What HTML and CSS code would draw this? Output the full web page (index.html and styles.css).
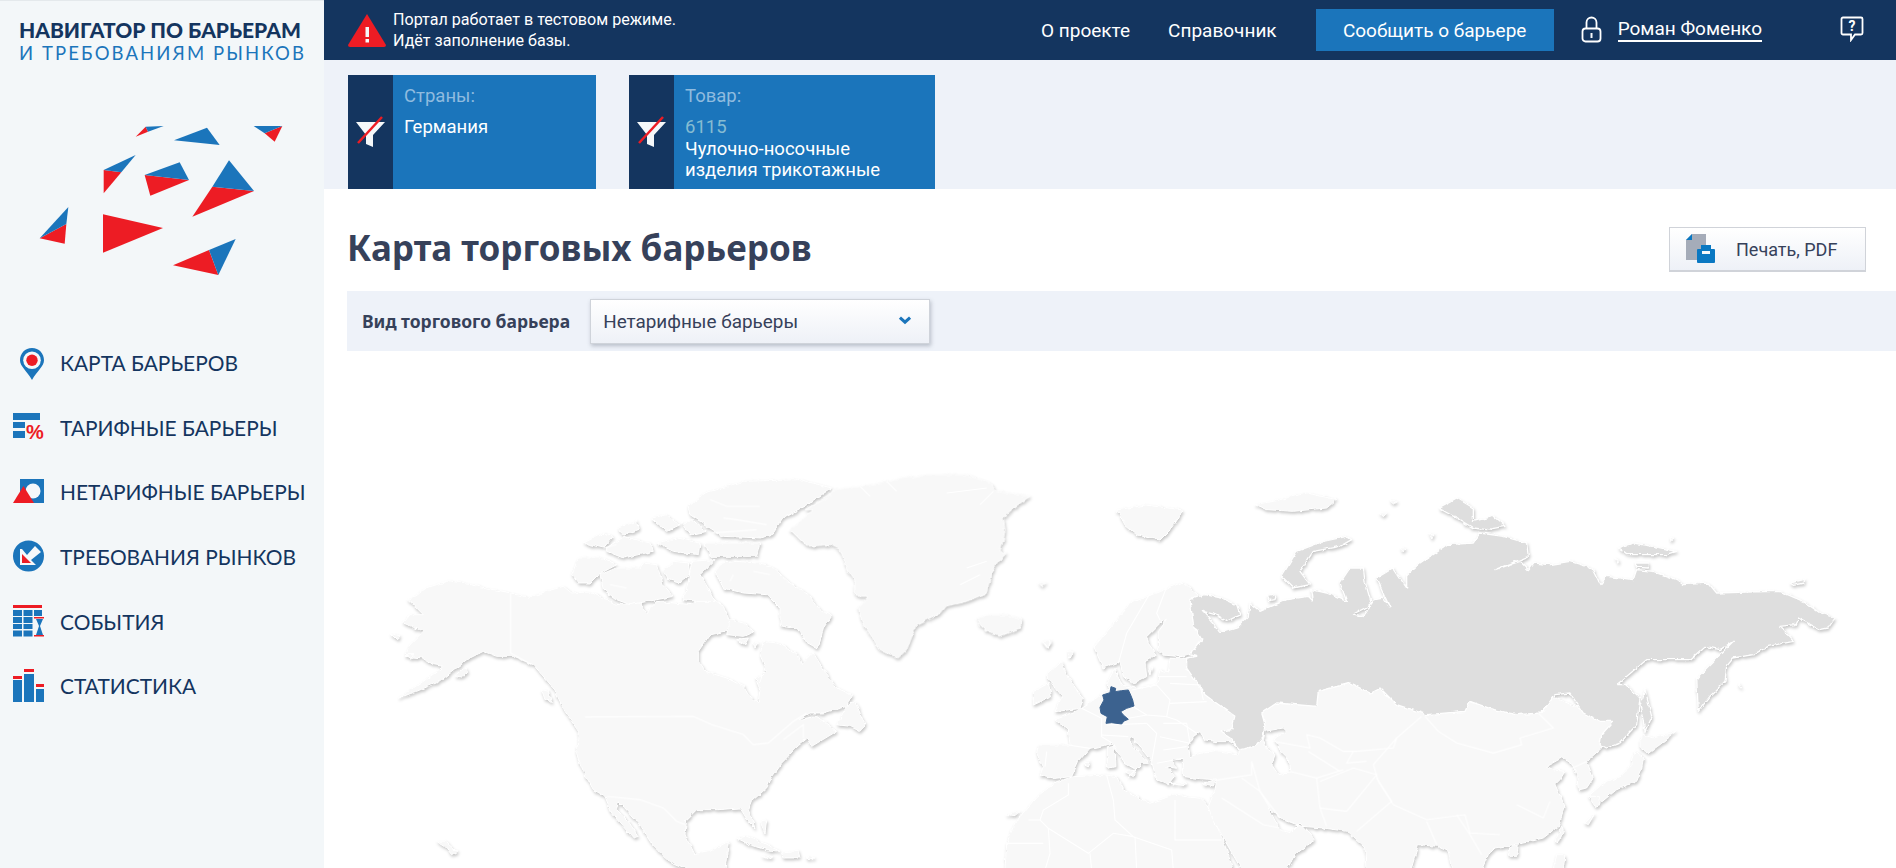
FILE: index.html
```html
<!DOCTYPE html>
<html lang="ru">
<head>
<meta charset="utf-8">
<title>Навигатор по барьерам</title>
<link rel="stylesheet" href="styles.css">
</head>
<body>
<aside class="sidebar">
  <div class="brand">
    <div class="brand-top">НАВИГАТОР ПО БАРЬЕРАМ</div>
    <div class="brand-sub">И ТРЕБОВАНИЯМ РЫНКОВ</div>
  </div>
  <svg class="logo" viewBox="100 360 780 480" aria-hidden="true">
    <g class="c-red">
      <polygon points="408,410 438,380 445,395"/><polygon points="795,400 848,378 825,425"/>
      <polygon points="312,510 365,517 312,580"/><polygon points="435,525 568,540 452,587"/>
      <polygon points="638,560 763,573 578,650"/><polygon points="120,715 200,672 195,731"/>
      <polygon points="310,643 490,684 310,758"/><polygon points="520,796 628,750 656,825"/>
    </g>
    <g class="c-blue">
      <polygon points="438,380 492,378 445,395"/><polygon points="523,421 622,383 660,435"/>
      <polygon points="762,378 848,378 795,400"/><polygon points="312,510 408,465 365,517"/>
      <polygon points="435,525 540,487 568,540"/><polygon points="688,481 763,573 638,560"/>
      <polygon points="206,621 200,672 120,715"/><polygon points="628,750 708,717 656,825"/>
    </g>
  </svg>
  <nav class="menu">
    <a class="menu-item">
      <svg class="menu-icon" viewBox="0 0 32 34"><path class="c-blue" d="M19 2C12 2 7 7.500 7 14.300c0 6 7 11 12 19.700 5-8.700 12-13.700 12-19.700C31 7.500 26 2 19 2z"/><circle class="c-white" cx="19" cy="14.300" r="8.800"/><circle class="c-red" cx="19" cy="14.300" r="5.700"/></svg>
      <span>КАРТА БАРЬЕРОВ</span>
    </a>
    <a class="menu-item">
      <svg class="menu-icon" viewBox="0 0 32 34"><rect class="c-blue" x="0" y="3" width="27" height="7"/><rect class="c-blue" x="0" y="12" width="12" height="6"/><rect class="c-blue" x="0" y="21" width="12" height="7"/><text class="pct" x="13" y="29">%</text></svg>
      <span>ТАРИФНЫЕ БАРЬЕРЫ</span>
    </a>
    <a class="menu-item">
      <svg class="menu-icon" viewBox="0 0 32 34"><rect class="c-blue" x="7" y="4" width="24" height="24"/><circle class="c-white" cx="20" cy="16" r="7.500"/><polygon class="c-red" points="0,28 21,28 10.500,11"/></svg>
      <span>НЕТАРИФНЫЕ БАРЬЕРЫ</span>
    </a>
    <a class="menu-item">
      <svg class="menu-icon" viewBox="0 0 32 34"><circle class="c-blue" cx="15.500" cy="16" r="15.500"/><polygon class="c-white" points="7,9 7,25 23,25 18,20 28,12 22,6 14,15 9,9"/><polygon class="c-red" points="9,14 9,23 18,23"/></svg>
      <span>ТРЕБОВАНИЯ РЫНКОВ</span>
    </a>
    <a class="menu-item">
      <svg class="menu-icon" viewBox="0 0 32 34"><rect class="c-red" x="0" y="1" width="29" height="3"/><g class="c-blue"><rect x="0" y="6" width="9" height="6"/><rect x="10.500" y="6" width="9" height="6"/><rect x="21" y="6" width="8" height="6"/><rect x="0" y="13" width="9" height="6"/><rect x="10.500" y="13" width="9" height="6"/><rect x="0" y="20" width="9" height="5"/><rect x="10.500" y="20" width="9" height="5"/><rect x="0" y="26.500" width="9" height="6"/><rect x="10.500" y="26.500" width="9" height="6"/><polygon points="23,15 30,15 27,22 30,31 23,31 26,22"/></g><rect class="c-red" x="21" y="13" width="10" height="1.500"/><rect class="c-red" x="21" y="31" width="10" height="1.500"/></svg>
      <span>СОБЫТИЯ</span>
    </a>
    <a class="menu-item">
      <svg class="menu-icon" viewBox="0 0 32 34"><g class="c-blue"><rect x="0" y="11" width="9" height="22"/><rect x="11" y="5" width="10" height="28"/><rect x="23" y="20" width="8" height="13"/></g><g class="c-red"><rect x="0" y="7" width="9" height="3"/><rect x="11" y="0" width="10" height="3"/><rect x="23" y="15" width="8" height="3"/></g></svg>
      <span>СТАТИСТИКА</span>
    </a>
  </nav>
</aside>

<main class="main">
  <header class="topbar">
    <svg class="warn-icon" viewBox="0 0 38 33"><path class="c-red" d="M19 0 L38 31 Q38 33 36 33 L2 33 Q0 33 0 31 Z"/><rect class="c-white" x="17.500" y="13" width="3.500" height="10"/><rect class="c-white" x="17.500" y="25" width="3.500" height="3.500"/></svg>
    <p class="warn-text">Портал работает в тестовом режиме.<br>Идёт заполнение базы.</p>
    <div class="topbar-spacer"></div>
    <a class="top-link top-link-first">О проекте</a>
    <a class="top-link top-link-second">Справочник</a>
    <a class="report-btn">Сообщить о барьере</a>
    <svg class="lock-icon" viewBox="0 0 21 27"><path class="line-white" d="M5.500 13V6.500a5 5 0 0 1 10 0V13"/><rect class="line-white" x="1.500" y="12.500" width="18" height="13" rx="3"/><rect class="c-white" x="9.500" y="17" width="2" height="5"/></svg>
    <a class="user-link">Роман Фоменко</a>
    <svg class="help-icon" viewBox="0 0 24 26"><path class="line-white" d="M3 1.500H21a1.500 1.500 0 0 1 1.500 1.500V17a1.500 1.500 0 0 1-1.500 1.500H15L11 24V18.500H3A1.500 1.500 0 0 1 1.500 17V3A1.500 1.500 0 0 1 3 1.500z"/><text class="help-q" x="12" y="15">?</text></svg>
  </header>

  <section class="filters">
    <div class="filter-card filter-card-country">
      <div class="filter-side">
        <svg class="filter-icon" viewBox="0 0 30 32"><polygon class="c-white" points="0,6 29,6 17,19 17,31 10,28 10,19"/><line class="slash" x1="2" y1="27" x2="26" y2="1"/></svg>
      </div>
      <div class="filter-body">
        <div class="filter-label">Страны:</div>
        <div class="filter-value">Германия</div>
      </div>
    </div>
    <div class="filter-card filter-card-goods">
      <div class="filter-side">
        <svg class="filter-icon" viewBox="0 0 30 32"><polygon class="c-white" points="0,6 29,6 17,19 17,31 10,28 10,19"/><line class="slash" x1="2" y1="27" x2="26" y2="1"/></svg>
      </div>
      <div class="filter-body">
        <div class="filter-label">Товар:</div>
        <div class="filter-code">6115</div>
        <div class="filter-goods">Чулочно-носочные<br>изделия трикотажные</div>
      </div>
    </div>
  </section>

  <div class="title-row">
    <h1 class="page-title">Карта торговых барьеров</h1>
    <a class="print-btn">
      <svg class="print-icon" viewBox="0 0 30 30"><polygon class="c-grey" points="0,6 6,0 20,0 20,26 0,26"/><polygon class="c-print" points="0,6 6,0 6,6"/><rect class="c-print" x="15" y="11" width="10" height="6"/><rect class="c-print" x="11" y="15" width="18" height="14" rx="1"/><rect class="c-white" x="16" y="17" width="8" height="3"/></svg>
      <span>Печать, PDF</span>
    </a>
  </div>

  <div class="type-bar">
    <span class="type-label">Вид торгового барьера</span>
    <div class="type-select">
      <span>Нетарифные барьеры</span>
      <svg class="chevron" viewBox="0 0 12 8"><polyline points="1.500,1.500 6,5.500 10.500,1.500"/></svg>
    </div>
  </div>

  <div class="map-area">
    <svg class="map" viewBox="324 351 1572 517" aria-hidden="true">
      <defs>
        <filter id="rough" filterUnits="userSpaceOnUse" x="324" y="351" width="1572" height="517" color-interpolation-filters="sRGB">
          <feTurbulence type="fractalNoise" baseFrequency="0.16" numOctaves="2" seed="4" result="n"/>
          <feDisplacementMap in="SourceGraphic" in2="n" scale="4" xChannelSelector="R" yChannelSelector="G" result="d"/>
          <feDropShadow in="d" dx="1" dy="2" stdDeviation="1.600" flood-color="#000" flood-opacity=".22"/>
        </filter>
      </defs>
      <g filter="url(#rough)">
        <!-- North America -->
        <g class="land" transform="translate(390 468) scale(.33333)">
          <path d="M175,338 L240,350 L362,375 L415,388 L470,370 L520,355 L545,375 L600,372 L650,395 L680,410 L750,405 L770,435 L800,400 L850,405 L905,410 L920,395 L960,385 L980,400 L1000,415 L1015,450 L1020,460 L1005,490 L960,500 L925,550 L925,580 L945,610 L1010,630 L1060,655 L1075,680 L1105,705 L1110,665 L1100,640 L1130,610 L1110,560 L1120,520 L1160,525 L1225,560 L1235,590 L1270,555 L1310,620 L1340,660 L1385,680 L1370,715 L1300,735 L1260,735 L1225,755 L1280,745 L1340,790 L1265,835 L1250,810 L1225,830 L1190,870 L1170,890 L1145,925 L1130,960 L1085,1000 L1075,1025 L1095,1080 L1075,1060 L1050,1020 L985,1025 L920,1025 L890,1055 L885,1100 L915,1160 L960,1150 L1015,1120 L1005,1205 L900,1205 L840,1180 L790,1135 L745,1065 L705,1020 L685,1000 L680,1025 L715,1060 L745,1105 L730,1110 L690,1065 L665,1035 L645,985 L610,965 L580,910 L560,860 L565,790 L525,730 L490,660 L430,590 L370,565 L320,565 L280,550 L240,570 L200,600 L150,640 L80,670 L25,690 L100,640 L160,595 L130,590 L100,570 L45,565 L60,530 L100,490 L40,465 L60,440 L100,440 L55,395 L110,360 Z"/>
          <path d="M975,310 L1000,285 L1040,280 L1100,285 L1150,300 L1200,345 L1255,380 L1290,425 L1325,445 L1300,480 L1285,540 L1250,520 L1220,480 L1170,470 L1170,420 L1130,380 L1060,375 L1000,360 Z"/>
          <path d="M1020,455 L1060,465 L1095,490 L1060,505 L1010,500 Z"/>
          <path d="M630,320 L680,300 L750,300 L760,285 L800,290 L820,350 L850,385 L800,395 L720,410 L680,395 L640,365 Z"/>
          <path d="M545,320 L565,270 L640,270 L680,290 L625,320 L600,345 L565,345 Z"/>
          <path d="M820,310 L850,280 L895,285 L900,320 L870,345 L835,335 Z"/>
          <path d="M905,280 L975,275 L930,320 L960,370 L975,400 L920,400 L880,395 L895,340 Z"/>
          <path d="M945,75 L1060,40 L1230,35 L1325,60 L1250,110 L1180,150 L1150,195 L1115,210 L1000,205 L960,180 L900,140 L895,115 Z"/>
          <path d="M945,225 L1110,225 L1100,265 L960,265 Z"/>
          <path d="M580,225 L640,195 L670,205 L640,240 Z"/>
          <path d="M650,240 L700,205 L780,225 L790,250 L700,270 L650,250 Z"/>
          <path d="M680,180 L740,160 L745,185 L700,200 Z"/>
          <path d="M785,150 L830,140 L870,170 L830,190 Z"/>
          <path d="M875,165 L910,155 L950,190 L900,200 Z"/>
          <path d="M800,225 L860,210 L930,225 L925,260 L850,250 Z"/>
          <path d="M1040,515 L1075,510 L1065,530 Z"/>
          <path d="M1090,525 L1105,525 L1095,540 Z"/>
          <path d="M1095,630 L1115,620 L1110,645 Z"/>
          <path d="M1340,770 L1370,715 L1395,700 L1425,770 L1410,790 L1380,775 Z"/>
          <path d="M455,665 L475,670 L485,700 L465,695 Z"/>
          <path d="M195,625 L225,600 L232,610 L215,630 Z"/>
          <path d="M0,495 L30,505 L20,515 Z"/>
          <path d="M45,560 L70,560 L65,572 Z"/>
          <path d="M140,1120 L165,1120 L200,1150 L185,1160 L165,1135 Z"/>
          <path d="M1040,1110 L1070,1105 L1120,1125 L1170,1150 L1130,1145 L1080,1130 Z"/>
          <path d="M1175,1155 L1225,1150 L1230,1170 L1180,1170 Z"/>
          <path d="M1115,1165 L1145,1165 L1140,1175 Z"/>
          <path d="M1250,1165 L1275,1170 L1250,1172 Z"/>
          <path d="M1110,1060 L1130,1055 L1125,1095 Z"/>
        </g>
        <!-- Greenland, Iceland -->
        <g class="land" transform="translate(790 468) scale(.33333)">
          <path d="M0,185 L70,125 L45,125 L115,85 L130,65 L210,55 L290,40 L400,20 L530,20 L600,45 L620,70 L720,85 L670,120 L640,150 L645,185 L640,215 L630,250 L645,255 L605,310 L595,350 L590,375 L530,400 L465,415 L450,435 L380,470 L350,545 L325,570 L270,545 L215,460 L205,420 L235,385 L195,385 L195,340 L175,310 L150,245 L120,230 L50,235 Z"/>
          <path d="M560,450 L600,440 L650,440 L695,455 L690,480 L630,505 L590,490 L570,470 Z"/>
          <path d="M745,345 L765,345 L755,358 Z"/>
          <path d="M755,520 L785,520 L770,540 Z"/>
        </g>
        <!-- Europe islands, Scandinavia, Africa -->
        <g class="land" transform="translate(1000 620) scale(.33333)">
          <path d="M549,-114 L393,-51 L282,81 L309,144 L360,125 L370,170 L400,190 L440,170 L435,125 L470,105 L445,70 L440,50 L480,10 L500,0 L475,35 L475,90 L490,105 L540,110 L575,100 L605,60 L585,0 L600,-70 Z"/>
          <path d="M140,165 L185,125 L205,175 L250,235 L240,265 L165,275 L185,230 L165,205 Z"/>
          <path d="M100,215 L145,190 L155,230 L100,255 Z"/>
          <path d="M375,455 L410,450 L400,470 Z"/>
          <path d="M322,380 L342,375 L345,440 L322,445 Z"/>
          <path d="M250,430 L270,425 L265,438 Z"/>
          <path d="M510,490 L560,490 L555,497 Z"/>
          <path d="M610,490 L650,478 L640,498 Z"/>
          <path d="M445,150 L455,140 L450,165 Z"/>
          <path d="M130,65 L150,65 L145,85 Z"/>
          <path d="M200,95 L220,95 L210,112 Z"/>
          <path d="M170,485 L220,470 L320,465 L350,470 L370,510 L450,550 L520,525 L600,535 L620,555 L640,590 L680,690 L700,750 L15,750 L20,670 L40,620 L60,590 L110,530 Z"/>
          <path d="M15,585 L60,575 L45,590 Z"/>
          <path d="M351,-330 L437,-345 L549,-330 L510,-270 L480,-240 L411,-255 L375,-285 Z"/>
        </g>
        <!-- Eurasia -->
        <g transform="translate(1180 468) scale(.33333)">
          <path class="land-path" fill-rule="evenodd" d="M-195,601 L-220,646 L-210,661 L-240,681 L-270,706 L-295,721 L-375,756 L-335,786 L-330,831 L-425,831 L-430,856 L-410,896 L-420,921 L-375,931 L-325,926 L-305,881 L-270,841 L-220,831 L-205,824 L-165,886 L-130,906 L-155,926 L-115,886 L-95,886 L-155,816 L-145,806 L-85,881 L-70,936 L-35,951 L-15,926 L-40,896 L-10,901 L-25,876 L10,871 L10,896 L10,926 L50,931 L110,936 L105,966 L85,1016 L95,1046 L130,1110 L185,1205 L320,1205 L345,1160 L405,1115 L360,1065 L330,1095 L300,1085 L265,1020 L310,1055 L365,1075 L430,1080 L500,1090 L555,1140 L558,1205 L693,1205 L715,1130 L770,1135 L805,1150 L815,1205 L905,1205 L925,1160 L945,1140 L1030,1125 L1090,1110 L1135,1075 L1155,1015 L1125,950 L1140,935 L1155,910 L1120,905 L1100,895 L1145,870 L1175,885 L1190,920 L1195,965 L1220,960 L1240,930 L1220,880 L1265,840 L1265,800 L1300,760 L1100,680 L600,640 L100,640 L25,571 L-30,571 L-35,611 L-60,606 L-70,651 L-130,661 L-175,651 Z M25,836 L40,806 L60,791 L75,816 L110,821 L150,821 L180,841 L175,861 L110,851 L60,856 L30,866 Z M255,790 L310,780 L320,790 L285,810 L300,850 L325,875 L330,915 L295,920 L275,890 L285,860 L265,845 L250,820 Z"/>
          <path class="land-path" d="M985,1140 L1015,1130 L1010,1165 L990,1165 Z"/>
          <path class="land-path" d="M225,110 L280,100 L380,75 L470,95 L440,120 L340,130 L260,125 Z"/>
          <path class="land-path" d="M630,98 L655,98 L640,108 Z"/>
          <path class="land-path" d="M600,135 L620,135 L610,146 Z"/>
          <path class="land-path" d="M745,200 L765,198 L755,210 Z"/>
          <path class="land-path" d="M660,240 L680,240 L670,252 Z"/>
          <g transform="translate(1020 0)">
            <path class="land-path" d="M360,820 L370,800 L400,810 L470,790 L420,830 L385,855 L360,840 Z"/>
            <path class="land-path" d="M345,850 L370,870 L365,905 L350,940 L290,965 L235,1010 L205,985 L250,945 L300,925 L335,890 Z"/>
            <path class="land-path" d="M205,985 L235,985 L240,1010 L225,1015 Z"/>
            <path class="land-path" d="M105,1120 L125,1075 L130,1090 L115,1125 Z"/>
            <path class="land-path" d="M100,1205 L110,1160 L135,1160 L130,1205 Z"/>
            <path class="land-path" d="M195,1065 L225,1035 L205,1070 Z"/>
            <path class="land-path" d="M655,645 L665,660 L655,655 Z"/>
            <path class="land-path" d="M450,208 L462,210 L452,218 Z"/>
            <path class="land-path" d="M285,270 L300,280 L295,288 Z"/>
          </g>
          <path class="russia" d="M30,395 L75,380 L125,390 L170,410 L180,440 L140,460 L105,440 L70,430 L100,465 L120,495 L170,480 L205,445 L210,405 L240,430 L320,395 L385,385 L400,400 L395,365 L440,375 L500,400 L480,345 L510,300 L550,300 L555,340 L565,375 L575,410 L520,438 L550,445 L585,395 L610,390 L630,420 L590,330 L640,300 L680,360 L680,320 L720,285 L800,230 L880,225 L900,195 L970,205 L1040,225 L1045,265 L945,305 L1020,280 L1045,305 L1060,285 L1110,290 L1170,280 L1235,300 L1260,350 L1280,325 L1360,335 L1370,305 L1420,310 L1490,335 L1510,350 L1585,345 L1610,375 L1700,372 L1800,370 L1870,400 L1920,435 L1965,450 L1945,480 L1920,485 L1855,450 L1845,470 L1800,475 L1840,520 L1765,535 L1720,560 L1660,570 L1640,595 L1635,640 L1590,685 L1555,730 L1550,630 L1660,520 L1620,545 L1575,535 L1530,575 L1460,575 L1400,575 L1310,650 L1340,650 L1380,690 L1370,770 L1320,825 L1280,840 L1260,830 L1265,800 L1300,760 L1260,760 L1210,735 L1170,675 L1125,680 L1085,735 L1010,740 L940,725 L870,700 L855,730 L740,740 L650,710 L600,660 L570,675 L510,645 L415,670 L410,715 L290,705 L245,735 L255,770 L250,805 L225,835 L180,845 L150,810 L120,790 L155,785 L165,745 L95,695 L75,680 L20,600 L20,570 L50,565 L30,560 L65,515 L40,470 Z"/>
          <path class="russia" d="M305,325 L350,250 L430,220 L500,205 L515,215 L480,235 L400,250 L360,310 L390,350 L340,360 Z"/>
          <path class="russia" d="M775,120 L830,90 L880,120 L880,160 L940,145 L975,175 L920,185 L880,180 L830,150 Z"/>
          <path class="russia" d="M262,385 L288,380 L285,395 L268,398 Z"/>
          <g transform="translate(1020 0)">
            <path class="russia" d="M295,240 L340,225 L400,235 L470,250 L440,260 L320,260 Z"/>
            <path class="russia" d="M345,285 L385,285 L385,300 L350,298 Z"/>
            <path class="russia" d="M360,710 L375,665 L395,745 L375,790 L370,760 Z"/>
            <path class="russia" d="M810,345 L850,335 L855,345 L820,352 Z"/>
          </g>
        </g>
      </g>
      <!-- Borders -->
      <g class="borders">
        <g transform="translate(390 468) scale(.33333)">
          <path d="M362,375 L362,555 L425,590"/>
          <path d="M585,747 L910,745 L965,770 L1060,800 L1090,830 L1135,825 L1210,760 L1250,735"/>
          <path d="M650,985 L750,995 L820,1020 L860,1060 L885,1070"/>
          <path d="M1180,815 L1240,770 L1240,810"/>
          <path d="M960,95 L1010,115 L1110,115 M1000,150 L1040,155 L1130,170 M965,195 L1100,185"/>
          <path d="M1030,320 L1020,340 M1090,310 L1140,320 M660,350 L710,360 M640,240 L680,230"/>
        </g>
        <g transform="translate(790 468) scale(.33333)">
          <path d="M210,55 L240,85 M290,40 L320,70 M470,75 L590,60 M570,110 L610,70 M530,300 L590,280 M510,350 L570,320"/>
        </g>
        <g transform="translate(1000 620) scale(.33333)">
          <path d="M450,-80 L380,40 L355,130"/>
          <path d="M500,-100 L470,-20 L480,0"/>
          <path d="M245,265 L305,295 L305,350 L335,368"/>
          <path d="M205,375 L270,385"/>
          <path d="M140,395 L135,440"/>
          <path d="M395,210 L470,195 L510,240 L500,290 L440,285 L400,260"/>
          <path d="M510,190 L600,195 L610,240"/>
          <path d="M510,250 L620,245"/>
          <path d="M500,290 L530,300 L590,340"/>
          <path d="M480,170 L560,170"/>
          <path d="M385,295 L440,285"/>
          <path d="M320,315 L440,310"/>
          <path d="M305,345 L385,350"/>
          <path d="M440,310 L470,340 L455,425"/>
          <path d="M490,310 L560,310 L570,370 L480,350"/>
          <path d="M490,390 L560,380"/>
          <path d="M470,430 L550,415"/>
          <path d="M320,465 L340,540 L345,600 L400,650 L515,690 L520,750"/>
          <path d="M525,540 L525,660 L665,660"/>
          <path d="M205,490 L205,525 L130,570 L120,600 L85,600"/>
          <path d="M120,600 L145,625 L265,700 L340,640 L400,650"/>
          <path d="M145,625 L150,700 L135,750"/>
          <path d="M20,670 L130,670"/>
          <path d="M270,700 L275,750"/>
          <path d="M405,650 L410,750"/>
        </g>
        <g transform="translate(1180 468) scale(.33333)">
          <path d="M110,936 L215,920 L215,880"/>
          <path d="M185,930 L240,970 L270,1020"/>
          <path d="M125,990 L250,1070 L300,1080"/>
          <path d="M215,880 L240,970 L300,1050"/>
          <path d="M410,930 L420,1020 L440,1075"/>
          <path d="M330,910 L410,930 L490,905"/>
          <path d="M420,940 L520,900 L590,920 L545,975 L500,1030 L420,1020"/>
          <path d="M590,930 L635,1000 L530,1090"/>
          <path d="M640,1010 L740,1055 L855,1040 L870,1095 L960,1100"/>
          <path d="M740,1060 L770,1130"/>
          <path d="M830,1040 L870,1100 L905,1160"/>
          <path d="M255,815 L390,840 L380,800 L420,810 L490,850 L530,850 L640,840 L650,810 L725,745"/>
          <path d="M385,850 L480,910"/>
          <path d="M650,810 L580,890 L595,940 L640,1010"/>
          <path d="M735,745 L775,790 L830,825 L940,855 L1025,830 L1020,810 L1120,780 L1075,735"/>
          <path d="M1155,910 L1220,880"/>
          <path d="M520,850 L500,885 L560,880"/>
          <path d="M1010,1010 L1090,1050 L1110,1000"/>
        </g>
      </g>
      <!-- Germany -->
      <g transform="translate(1000 620) scale(.33333)">
        <path class="germany" d="M333,200 L347,205 L345,215 L365,212 L385,210 L392,225 L398,240 L402,258 L380,265 L362,275 L370,285 L385,298 L372,303 L365,312 L335,308 L318,310 L322,290 L303,280 L300,262 L312,240 L308,225 L330,218 Z"/>
      </g>
    </svg>
  </div>
</main>
</body>
</html>
```

FILE: styles.css
```css
* { box-sizing: border-box; }
html, body { margin: 0; height: 100%; }
body {
  display: flex;
  height: 868px;
  overflow: hidden;
  background: #fff;
  font-family: "Roboto", "Noto Sans", sans-serif;
  color: #36415a;
}
a { color: inherit; text-decoration: none; }

.c-red { fill: #ed1c24; }
.c-blue { fill: #1b75bb; }
.c-white { fill: #f5f8fa; }
.c-grey { fill: #a5acb9; }
.c-print { fill: #0a78c2; }
.line-white { fill: none; stroke: #fff; stroke-width: 1.800; }

/* Sidebar */
.sidebar {
  flex: 0 0 324px;
  background: #f3f7f9;
  border-top: 1px solid #e4e9ec;
}
.brand { padding: 17px 0 0 19px; height: 119px; font-family: "Lato", "Noto Sans", sans-serif; }
.brand-top { font-size: 21px; line-height: 24px; font-weight: 900; color: #14355f; white-space: nowrap; }
.brand-sub { font-size: 18.500px; line-height: 23px; letter-spacing: 2.100px; font-weight: 400; color: #1b75bb; white-space: nowrap; }
.logo { display: block; width: 260px; height: 160px; margin-left: 33px; }
.menu { margin-top: 50.500px; }
.menu-item {
  display: flex;
  align-items: center;
  height: 64.600px;
  padding-left: 13px;
  font-family: "Lato", "Noto Sans", sans-serif;
  font-size: 20.900px;
  color: #14355f;
  white-space: nowrap;
}
.menu-icon { flex: 0 0 32px; width: 32px; height: 34px; margin-right: 15px; }
.pct { font-family: "Liberation Sans", sans-serif; font-size: 20px; font-weight: 700; fill: #ed1c24; }

/* Main */
.main { flex: 1; min-width: 0; display: flex; flex-direction: column; }
.topbar {
  flex: 0 0 60px;
  display: flex;
  align-items: center;
  padding: 0 32px 0 24px;
  background: #14355f;
  color: #fff;
}
.warn-icon { width: 38px; height: 33px; margin-right: 7px; }
.warn-text { margin: 0; font-size: 16.100px; line-height: 21px; white-space: nowrap; }
.topbar-spacer { flex: 1; }
.top-link { font-size: 19px; white-space: nowrap; }
.top-link-first { margin-right: 38px; }
.top-link-second { margin-right: 39px; }
.report-btn {
  flex: 0 0 238px;
  height: 42px;
  background: #1b75bb;
  display: flex;
  align-items: center;
  justify-content: center;
  font-size: 19px;
  margin-right: 27px;
}
.lock-icon { width: 21px; height: 27px; margin: -2px 16px 0 0; }
.user-link { font-size: 19px; border-bottom: 2px solid #fff; line-height: 22px; white-space: nowrap; margin-right: 78px; }
.help-icon { width: 24px; height: 26px; margin-top: -2px; }
.help-q { font-size: 14px; font-weight: 700; fill: #fff; text-anchor: middle; }

.filters {
  flex: 0 0 129px;
  display: flex;
  align-items: flex-end;
  gap: 33px;
  padding-left: 24px;
  background: #eef2f9;
}
.filter-card { display: flex; height: 114px; background: #1b75bb; color: #fff; }
.filter-card-country { width: 248px; }
.filter-card-goods { width: 306px; }
.filter-side {
  flex: 0 0 45px;
  display: flex;
  align-items: center;
  justify-content: center;
  background: #14355f;
}
.filter-icon { width: 30px; height: 32px; margin-top: 0; }
.slash { stroke: #ed1c24; stroke-width: 2.500; }
.filter-body { padding: 11px 0 0 11px; font-size: 18.500px; line-height: 21.600px; }
.filter-label { color: #8fbbdf; margin-bottom: 9.500px; }
.filter-code { color: #86bcd2; }

.title-row {
  flex: 0 0 102px;
  display: flex;
  align-items: flex-start;
  justify-content: space-between;
  padding: 38px 30px 0 23px;
}
.page-title { margin: -2px 0 0; font-family: "Noto Sans", sans-serif; font-size: 35px; line-height: 46px; font-weight: 700; color: #36415a; }
.print-btn {
  width: 197px;
  height: 45px;
  display: flex;
  align-items: center;
  padding-left: 16px;
  border: 1px solid #d0d3d9;
  border-bottom-width: 2px;
  background: linear-gradient(#fff, #eef1f7);
  font-size: 18px;
  color: #36415a;
}
.print-icon { width: 30px; height: 30px; margin-right: 20px; }

.type-bar {
  flex: 0 0 60px;
  display: flex;
  align-items: center;
  margin-left: 23px;
  padding-left: 15px;
  background: #eef2f9;
}
.type-label { font-family: "Noto Sans", sans-serif; font-size: 17.500px; font-weight: 700; color: #36415a; margin-right: 20px; white-space: nowrap; }
.type-select {
  width: 340px;
  height: 45px;
  display: flex;
  align-items: center;
  justify-content: space-between;
  padding: 0 17px 0 12px;
  border: 1px solid #cfd3da;
  background: linear-gradient(#fff, #eef1f7);
  box-shadow: 1px 2px 4px rgba(60, 70, 90, .3);
  font-size: 18.900px;
  color: #36415a;
}
.chevron { width: 14px; height: 9px; margin-top: -2px; }
.chevron polyline { fill: none; stroke: #1b75bb; stroke-width: 2.800; }

.map-area { flex: 1; min-height: 0; }
.map { display: block; width: 1572px; height: 517px; }
.land path, .land-path {
  fill: #f8f8f8;
  stroke: #fff;
  stroke-width: 1;
  vector-effect: non-scaling-stroke;
}
.russia {
  fill: #dedede;
  stroke: #fff;
  stroke-width: 1.300;
  stroke-linejoin: round;
  vector-effect: non-scaling-stroke;
}
.borders path {
  fill: none;
  stroke: #fff;
  stroke-width: 1.100;
  vector-effect: non-scaling-stroke;
}
.germany { fill: #3c628f; stroke: #3c628f; stroke-width: 1; vector-effect: non-scaling-stroke; }
```
